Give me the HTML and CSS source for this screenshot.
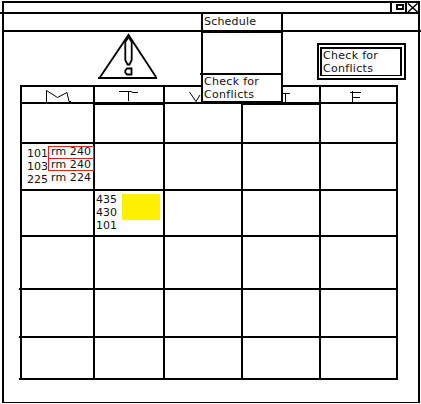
FILE: index.html
```html
<!DOCTYPE html>
<html lang="en">
<head>
<meta charset="utf-8">
<title>Schedule</title>
<link rel="stylesheet" href="styles.css">
</head>
<body>
<div class="window">
  <header class="titlebar">
    <svg class="controls" width="28" height="9" viewBox="390 3 28 9">
      <path d="M391 3v9M406 3v9M397 5h6v4h-6z" class="thick"/>
      <path d="M408 3.500L417.500 12M417.500 3.500L408 12" class="cross"/>
    </svg>
  </header>
  <nav class="menubar">
    <div class="menu">
      <div class="menu-title">Schedule</div>
      <div class="menu-space"></div>
      <div class="menu-item">Check for<br>Conflicts</div>
    </div>
  </nav>
  <section class="toolbar">
    <svg class="warning" width="62" height="48" viewBox="97 32 62 48">
      <path d="M98 78H157" class="thick"/>
      <path d="M99.500 78L128.500 35L156 77" class="edge"/>
      <path d="M128.500 37L125.300 42V60L127.500 64.500H129.500L131.700 60V42zM127 68.500H131.500V74.500H127L125.300 72.500V70.500z" class="mark"/>
    </svg>
    <button class="check"><span>Check for<br>Conflicts</span></button>
  </section>
  <main class="grid">
    <div class="cell head first"><svg width="70" height="15" viewBox="22 87 70 15"><path d="M46.500 102V90.500L57.500 97.500L67 92.500L69 101.500H71"/></svg></div>
    <div class="cell head"><svg width="69" height="15" viewBox="94 87 69 15"><path d="M118 91.500H130L132 92.500H137M127.500 91V101"/></svg></div>
    <div class="cell head"><svg width="76" height="15" viewBox="165 87 76 15"><path d="M189.500 92L196 101.500L200 95"/></svg></div>
    <div class="cell head"><svg width="77" height="15" viewBox="243 87 77 15"><path d="M282 93.500H290M285.500 93V102"/></svg></div>
    <div class="cell head"><svg width="74" height="15" viewBox="322 87 74 15"><path d="M351 92.500H362M353.500 91V102M353 97.500H361"/></svg></div>
    <div class="cell first"></div><div class="cell heavy"></div><div class="cell"></div><div class="cell heavy"></div><div class="cell"></div>
    <div class="cell first booking">
      <div class="courses">101<br>103<br>225</div>
      <div class="rooms"><div class="room conflict upper">rm 240</div><div class="room conflict">rm 240</div><div class="room clear">rm 224</div></div>
    </div><div class="cell"></div><div class="cell"></div><div class="cell"></div><div class="cell"></div>
    <div class="cell first"></div>
    <div class="cell pending"><div>435<br>430<br>101</div><div class="highlight"></div></div><div class="cell"></div><div class="cell"></div><div class="cell"></div>
    <div class="cell first overhang"></div><div class="cell"></div><div class="cell"></div><div class="cell"></div><div class="cell"></div>
    <div class="cell first overhang"></div><div class="cell"></div><div class="cell"></div><div class="cell"></div><div class="cell"></div>
    <div class="cell first overhang"></div><div class="cell"></div><div class="cell"></div><div class="cell"></div><div class="cell"></div>
  </main>
</div>
</body>
</html>
```
FILE: styles.css
```css
* { box-sizing: border-box; }
body {
  margin: 0;
  width: 421px;
  height: 404px;
  overflow: hidden;
  background: #fff;
  color: #111;
  font: 11px/13px "DejaVu Sans", sans-serif;
}
svg { display: block; fill: none; stroke: #000; stroke-width: 1; }
.thick { stroke-width: 2; }
.cross { stroke-width: 1.5; }
.edge { stroke-width: 1.8; }
.mark { stroke-width: 1.8; }
.window {
  width: 418px;
  height: 402px;
  margin: 1px 0 0 2px;
  border: 2px solid #000;
  border-bottom-width: 1px;
}
.titlebar {
  height: 11px;
  margin-left: -4px;
  border-bottom: 2px solid #000;
  display: flex;
  justify-content: flex-end;
}
.menubar {
  position: relative;
  height: 18px;
  margin-right: -3px;
  border-bottom: 2px solid #000;
}
.menu {
  position: absolute;
  left: 197px;
  top: -2px;
  width: 82px;
  height: 91px;
  border: 2px solid #000;
  background: #fff;
  letter-spacing: 0.2px;
}
.menu-title { height: 19px; padding: 1px 0 0 1px; border-bottom: 3px solid #000; }
.menu-space { height: 42px; margin-left: -3px; border-bottom: 2px solid #000; }
.menu-item { padding-left: 1px; letter-spacing: 0.3px; }
.toolbar { height: 53px; display: flex; }
.warning { margin-left: 93px; }
.check {
  width: 89px;
  height: 37px;
  margin: 11px 0 0 158px;
  padding: 2px 2px 2px 1px;
  border: 2px solid #000;
  background: #fff;
  color: inherit;
  font: inherit;
  letter-spacing: 0.3px;
  text-align: left;
}
.check span {
  display: block;
  height: 29px;
  border: 2px solid #000;
  border-bottom-width: 1px;
  padding-left: 1px;
}
.grid {
  width: 378px;
  margin-left: 16px;
  display: grid;
  grid-template-columns: 75px 70px 78px 78px 77px;
  grid-template-rows: 19px 40px 47px 46px 53px 48px 42px;
}
.cell { min-width: 0; border-right: 2px solid #000; border-bottom: 2px solid #000; }
.first { border-left: 2px solid #000; }
.overhang { position: relative; }
.overhang::after {
  content: "";
  position: absolute;
  left: -3px;
  bottom: -2px;
  width: 1px;
  height: 2px;
  background: #000;
}
.head { border-top: 2px solid #000; overflow: hidden; }
.heavy { border-top: 1px solid #000; }
.booking { display: flex; padding: 2px 0 0 5px; }
.courses { width: 21px; padding-top: 1px; }
.rooms { width: 46px; flex: none; }
.room { height: 13px; padding-left: 3px; line-height: 11px; letter-spacing: 0.1px; white-space: nowrap; }
.conflict { border: 1px solid #d22; padding-left: 2px; margin-bottom: -1px; }
.upper { line-height: 9px; }
.clear { line-height: 15px; }
.pending { display: flex; padding: 2px 0 0 1px; }
.highlight { width: 38px; height: 26px; margin: 1px 0 0 5px; background: #fff000; }
```
